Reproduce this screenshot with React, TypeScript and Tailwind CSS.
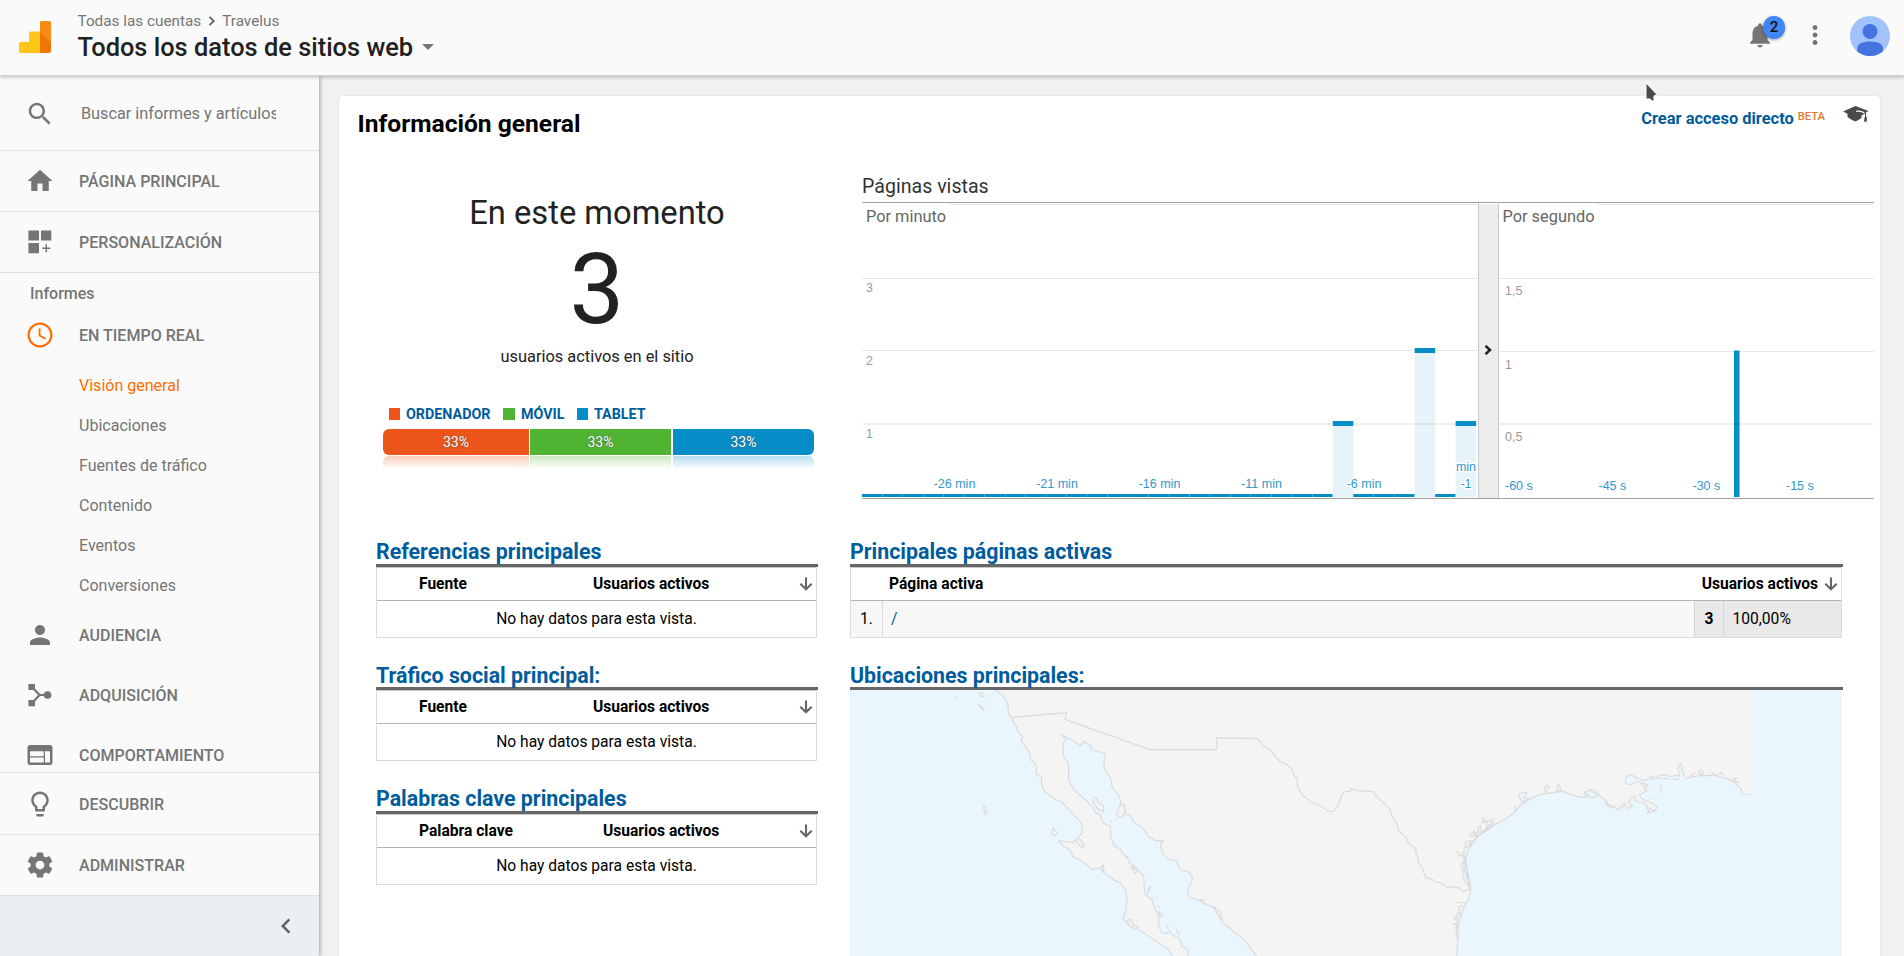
import React from "react";

type IconProps = { d: string; className?: string };

const Icon = ({ d, className = "h-[30px] w-[30px]" }: IconProps) => (
  <svg viewBox="0 0 24 24" className={`shrink-0 ${className}`} fill="currentColor">
    <path d={d} />
  </svg>
);

const PATHS = {
  search:
    "M15.5 14h-.79l-.28-.27C15.41 12.59 16 11.11 16 9.5 16 5.91 13.09 3 9.5 3S3 5.91 3 9.5 5.91 16 9.5 16c1.61 0 3.09-.59 4.23-1.57l.27.28v.79l5 4.99L20.49 19l-4.99-5zm-6 0C7.01 14 5 11.99 5 9.5S7.01 5 9.5 5 14 7.01 14 9.5 11.99 14 9.5 14z",
  home: "M10 20v-6h4v6h5v-8h3L12 3 2 12h3v8z",
  clock:
    "M11.99 2C6.47 2 2 6.48 2 12s4.47 10 9.99 10C17.52 22 22 17.52 22 12S17.52 2 11.99 2zM12 20.2c-4.53 0-8.2-3.67-8.2-8.2S7.470 3.800 12 3.800s8.200 3.670 8.200 8.200-3.670 8.200-8.200 8.200zM12.400 6.800h-1.500v6l5.200 3 .7-1.180-4.400-2.570z",
  person:
    "M12 12c2.21 0 4-1.79 4-4s-1.79-4-4-4-4 1.79-4 4 1.79 4 4 4zm0 2c-2.67 0-8 1.34-8 4v2h16v-2c0-2.66-5.33-4-8-4z",
  web: "M20 4H4c-1.1 0-1.99.9-1.99 2L2 18c0 1.1.9 2 2 2h16c1.1 0 2-.9 2-2V6c0-1.1-.9-2-2-2zm-5 14H4v-4h11v4zm0-5H4V9h11v4zm5 5h-4V9h4v9z",
  bulb: "M9 21c0 .55.45 1 1 1h4c.55 0 1-.45 1-1v-1H9v1zm3-19C8.14 2 5 5.14 5 9c0 2.38 1.19 4.47 3 5.74V17c0 .55.45 1 1 1h6c.55 0 1-.45 1-1v-2.26c1.81-1.27 3-3.36 3-5.74 0-3.86-3.14-7-7-7zm2.85 11.1l-.85.6V16h-4v-2.3l-.85-.6C7.8 12.16 7 10.63 7 9c0-2.76 2.24-5 5-5s5 2.24 5 5c0 1.63-.8 3.16-2.15 4.1z",
  gear: "M19.43 12.98c.04-.32.07-.64.07-.98s-.03-.66-.07-.98l2.11-1.65c.19-.15.24-.42.12-.64l-2-3.46c-.12-.22-.39-.3-.61-.22l-2.49 1c-.52-.4-1.08-.73-1.69-.98l-.38-2.65C14.46 2.18 14.25 2 14 2h-4c-.25 0-.46.18-.49.42l-.38 2.65c-.61.25-1.17.59-1.69.98l-2.49-1c-.23-.09-.49 0-.61.22l-2 3.46c-.13.22-.07.49.12.64l2.11 1.65c-.04.32-.07.65-.07.98s.03.66.07.98l-2.11 1.65c-.19.15-.24.42-.12.64l2 3.46c.12.22.39.3.61.22l2.49-1c.52.4 1.08.73 1.69.98l.38 2.65c.03.24.24.42.49.42h4c.25 0 .46-.18.49-.42l.38-2.65c.61-.25 1.17-.59 1.69-.98l2.49 1c.23.09.49 0 .61-.22l2-3.46c.12-.22.07-.49-.12-.64l-2.11-1.65zM12 15.5c-1.93 0-3.5-1.57-3.5-3.5s1.57-3.5 3.5-3.5 3.5 1.57 3.5 3.5-1.57 3.5-3.5 3.5z",
  left: "M15.41 7.41L14 6l-6 6 6 6 1.41-1.41L10.83 12z",
  bell: "M12 22c1.1 0 2-.9 2-2h-4c0 1.1.89 2 2 2zm6-6v-5c0-3.07-1.64-5.64-4.5-6.32V4c0-.83-.67-1.5-1.5-1.5s-1.5.67-1.5 1.5v.68C7.63 5.36 6 7.92 6 11v5l-2 2v1h16v-1l-2-2z",
  more: "M12 8c1.1 0 2-.9 2-2s-.9-2-2-2-2 .9-2 2 .9 2 2 2zm0 2c-1.1 0-2 .9-2 2s.9 2 2 2 2-.9 2-2-.9-2-2-2zm0 6c-1.1 0-2 .9-2 2s.9 2 2 2 2-.9 2-2-.9-2-2-2z",
};

const CustomizeIcon = () => (
  <svg viewBox="0 0 30 30" className="h-[30px] w-[30px] shrink-0" fill="currentColor">
    <path d="M3.4 3.4H14v10.2H3.4zM16 3.4h10.3v10.2H16zM3.4 16H14v10.3H3.4zM20.5 17.3h1.5v3.2h3.2V22H22v3.2h-1.5V22h-3.2v-1.5h3.2z" />
  </svg>
);

const AcquisitionIcon = () => (
  <svg viewBox="0 0 30 30" className="h-[30px] w-[30px] shrink-0" fill="currentColor">
    <path d="M3.4 4h6.6v6H3.4zM3.4 20h6.6v6.2H3.4z" />
    <path d="M8 8l6.6 7L8 22M14.6 15H22" fill="none" stroke="currentColor" strokeWidth="2.200" />
    <circle cx="22.6" cy="15" r="3.8" />
  </svg>
);

const Header = () => (
  <header className="relative z-20 flex h-[76px] shrink-0 items-start border-b border-[#cfcfcf] bg-[#fafafa] shadow-[0_1px_4px_rgba(0,0,0,0.25)]">
    <svg viewBox="0 0 32 32" className="mt-[21px] ml-[19px] h-8 w-8">
      <path d="M0 22.5q0-1.500 1.500-1.500H10V11.900q0-1.500 1.500-1.500H21V32H1.500Q0 32 0 30.500z" fill="#ffc517" />
      <path d="M21 2q0-1.700 1.700-1.700h7.600q1.700 0 1.700 1.700v28q0 2-2 2h-9z" fill="#ef7607" />
      <path d="M21 2q0-1.700 1.700-1.700h7.600q1.700 0 1.700 1.700v20L21 10.500z" fill="#f78a13" />
    </svg>
    <div className="ml-[26.500px] pt-[11px]">
      <div className="flex h-5 items-center text-[15.3px] leading-5 text-[#757575]">
        <span>Todas las cuentas</span>
        <svg viewBox="0 0 20 20" className="ml-px h-5 w-5" fill="none" stroke="#616161" strokeWidth="1.800">
          <path d="M7.500 5.800l4.300 4.200-4.300 4.200" />
        </svg>
        <span>Travelus</span>
      </div>
      <h1 className="flex h-8 items-center text-[25.4px] leading-8 font-medium text-[#212121]">
        Todos los datos de sitios web
        <svg viewBox="0 0 12 6" className="ml-[9px] h-[6px] w-[12px]" fill="#757575">
          <path d="M0 0h12L6 6z" />
        </svg>
      </h1>
    </div>
    <div className="mr-[14px] ml-auto flex items-start pt-4">
      <div className="relative mt-1 text-[#757575]">
        <Icon d={PATHS.bell} />
        <span className="absolute -top-1 left-[18px] flex h-[23px] w-[22px] items-center justify-center rounded-full bg-[#4285f4] text-[15px] font-medium text-[#111] shadow-[0_1px_3px_rgba(0,0,0,0.35)]">
          2
        </span>
      </div>
      <span className="mt-1 ml-[25px] text-[#757575]">
        <Icon d={PATHS.more} />
      </span>
      <svg viewBox="0 0 40 40" className="ml-[20px] h-10 w-10">
        <circle cx="20" cy="20" r="20" fill="#a1c2fa" />
        <circle cx="20" cy="15.500" r="7.500" fill="#4374e0" />
        <path d="M7.300 35.500V32c0-4.500 6-6.500 12.700-6.500s13 2 13 6.500v3.300A20 20 0 0 1 7.300 35.500z" fill="#4374e0" />
      </svg>
    </div>
  </header>
);

type NavProps = { icon: React.ReactNode; label: string; className: string };

const NavItem = ({ icon, label, className }: NavProps) => (
  <div className={`flex shrink-0 items-center pl-[25px] text-[#757575] ${className}`}>
    {icon}
    <span className="mt-px ml-6 pt-px text-[16.050px] leading-6 font-medium">{label}</span>
  </div>
);

const SUB_ITEMS = ["Visión general", "Ubicaciones", "Fuentes de tráfico", "Contenido", "Eventos", "Conversiones"];

const Sidebar = () => (
  <aside className="relative z-10 flex w-[319px] shrink-0 flex-col bg-[#fafafa] shadow-[1px_0_4px_rgba(0,0,0,0.35)]">
    <div className="flex h-[75px] shrink-0 items-center border-b border-[#e2e2e2] pl-[25px] text-[#757575]">
      <Icon d={PATHS.search} className="mt-px h-[30px] w-[30px]" />
      <span className="ml-[26px] w-[195px] overflow-hidden pt-px text-[16.25px] leading-6 whitespace-nowrap">
        Buscar informes y artículos
      </span>
    </div>
    <NavItem icon={<Icon d={PATHS.home} />} label="PÁGINA PRINCIPAL" className="h-[61px] border-b border-[#e2e2e2]" />
    <NavItem icon={<CustomizeIcon />} label="PERSONALIZACIÓN" className="h-[61px] border-b border-[#e2e2e2]" />
    <div className="flex min-h-0 flex-1 flex-col overflow-hidden">
      <div className="flex h-10 shrink-0 items-center pt-px pl-[30px] text-base font-medium text-[#757575]">
        Informes
      </div>
      <NavItem
        icon={
          <span className="text-[#ff6d00]">
            <Icon d={PATHS.clock} />
          </span>
        }
        label="EN TIEMPO REAL"
        className="h-[44px]"
      />
      <ul className="-mb-px shrink-0 pt-[9px] text-[16.050px] leading-10 text-[#757575]">
        {SUB_ITEMS.map((s, i) => (
          <li key={s} className={i === 0 ? "pl-[79px] text-[#ff6d00]" : "pl-[79px]"}>
            {s}
          </li>
        ))}
      </ul>
      <NavItem icon={<Icon d={PATHS.person} />} label="AUDIENCIA" className="h-[60px]" />
      <NavItem icon={<AcquisitionIcon />} label="ADQUISICIÓN" className="h-[60px]" />
      <NavItem icon={<Icon d={PATHS.web} />} label="COMPORTAMIENTO" className="h-[60px]" />
    </div>
    <NavItem icon={<Icon d={PATHS.bulb} />} label="DESCUBRIR" className="h-[62px] border-t border-[#e2e2e2]" />
    <NavItem icon={<Icon d={PATHS.gear} />} label="ADMINISTRAR" className="h-[61px] border-t border-[#e2e2e2]" />
    <div className="flex h-[61px] shrink-0 items-center justify-end border-t border-[#e2e2e2] bg-[#ebeff2] pr-[18px] text-[#616161]">
      <Icon d={PATHS.left} />
    </div>
  </aside>
);

const DEVICES = [
  { name: "ORDENADOR", box: "bg-[#ed561b] w-[11px]", bar: "bg-[#ed561b] w-[146px] rounded-l-md", fade: "from-[#ed561b] w-[146px] rounded-tl-md" },
  { name: "MÓVIL", box: "bg-[#50b432] w-[12px]", bar: "bg-[#50b432] w-[141px]", fade: "from-[#50b432] w-[141px]" },
  { name: "TABLET", box: "bg-[#058dc7] w-[11px]", bar: "bg-[#058dc7] w-[141px] rounded-r-md", fade: "from-[#058dc7] w-[141px] rounded-tr-md" },
];

const ActiveUsers = () => (
  <section className="ml-[37px] flex w-[442px] flex-col items-center pt-[41px] text-[#222]">
    <div className="text-[32.700px] leading-10">En este momento</div>
    <div className="mt-3 text-[97.500px] leading-[90px]">3</div>
    <div className="mt-3 text-[16.400px] leading-5">usuarios activos en el sitio</div>
    <div className="mt-[37px] flex h-5 items-center self-start pl-[13px] text-[14.300px] leading-5 font-bold text-[#005c9c]">
      {DEVICES.map((d) => (
        <span key={d.name} className="mr-[12.500px] flex items-center">
          <i className={`mr-[6px] -mt-px h-3 ${d.box}`} />
          {d.name}
        </span>
      ))}
    </div>
    <div className="mt-[5px] ml-[7px] flex h-[26px] self-start">
      {DEVICES.map((d, i) => (
        <div
          key={d.name}
          className={`flex items-center justify-center text-sm text-white [text-shadow:0_0_2px_#555] ${i === 2 ? "ml-[2px]" : i === 1 ? "ml-px" : ""} ${d.bar}`}
        >
          33%
        </div>
      ))}
    </div>
    <div className="mt-px ml-[7px] flex h-[13px] self-start opacity-30">
      {DEVICES.map((d, i) => (
        <div
          key={d.name}
          className={`bg-linear-to-b to-transparent ${i === 2 ? "ml-[2px]" : i === 1 ? "ml-px" : ""} ${d.fade}`}
        />
      ))}
    </div>
  </section>
);

const COLUMN = 20.47;
const MINUTES = Array.from({ length: 30 }, (_, i) => (i === 27 ? 2 : i === 23 || i === 29 ? 1 : 0));

const MinuteChart = () => (
  <svg
    viewBox="0 0 615 295"
    className="h-[295px] w-[615px] shrink-0 font-['Liberation_Sans',sans-serif] text-[12.500px]"
  >
    <rect x="88" y="1" width="527" height="1" fill="#e6e6e6" />
    <rect y="75" width="615" height="1" fill="#e6e6e6" />
    <rect y="147" width="615" height="1" fill="#e6e6e6" />
    <rect y="220" width="615" height="2" fill="#efefef" />
    {MINUTES.map((v, i) =>
      v === 0 ? (
        <rect key={i} x={i * COLUMN} y="291" width={COLUMN - 0.2} height="3" fill="#058dc7" />
      ) : (
        <g key={i} fill="#058dc7">
          <rect x={i * COLUMN} y={291 - v * 73} width={COLUMN} height={v * 73 + 3} fillOpacity="0.1" />
          <rect x={i * COLUMN} y={291 - v * 73} width={COLUMN} height="5" />
        </g>
      ),
    )}
    <g fill="#9a9a9a">
      <text x="4" y="89">3</text>
      <text x="4" y="162">2</text>
      <text x="4" y="235">1</text>
    </g>
    <g fill="#3399cc" textAnchor="middle" stroke="#fff" strokeWidth="3" strokeLinejoin="round" paintOrder="stroke">
      <text x="92.500" y="285">-26 min</text>
      <text x="195" y="285">-21 min</text>
      <text x="297.500" y="285">-16 min</text>
      <text x="399.500" y="285">-11 min</text>
      <text x="502" y="285">-6 min</text>
      <text x="604" y="267.500">min</text>
      <text x="604" y="285">-1</text>
    </g>
  </svg>
);

const SecondChart = () => (
  <svg viewBox="0 0 375 295" className="h-[295px] w-[375px] font-['Liberation_Sans',sans-serif] text-[12.500px]">
    <rect x="99" y="1" width="276" height="1" fill="#e6e6e6" />
    <rect y="75" width="375" height="1" fill="#e6e6e6" />
    <rect y="148" width="375" height="1" fill="#e6e6e6" />
    <rect x="235" y="147.500" width="5.500" height="146.500" fill="#058dc7" />
    <rect y="220" width="375" height="2" fill="#000" fillOpacity="0.06" />
    <g fill="#9a9a9a">
      <text x="6" y="92">1,5</text>
      <text x="6" y="166">1</text>
      <text x="6" y="238">0,5</text>
    </g>
    <g fill="#3399cc">
      <text x="6" y="287">-60 s</text>
      <text x="99.500" y="287">-45 s</text>
      <text x="193.500" y="287">-30 s</text>
      <text x="287" y="287">-15 s</text>
    </g>
  </svg>
);

const PageViews = () => (
  <section className="ml-[44px] w-[1012px] pt-[21px]">
    <h3 className="h-[30px] border-b border-[#a0a0a0] pt-px text-[19.600px] leading-[26px] text-[#333]">
      Páginas vistas
    </h3>
    <div className="flex h-[296px] border-b border-[#a0a0a0]">
      <div className="relative">
        <MinuteChart />
        <span className="absolute top-1 left-1 text-[16.350px] leading-5 text-[#666]">Por minuto</span>
      </div>
      <div className="mt-px ml-px flex w-[21px] items-center justify-center border-x border-[#c8c8c8] bg-[#ededed] pr-[2px] pb-[3px]">
        <svg viewBox="0 0 8 10" className="h-[10px] w-2" fill="none" stroke="#222" strokeWidth="2.500">
          <path d="M1.500 .8L6 5 1.500 9.200" />
        </svg>
      </div>
      <div className="relative">
        <SecondChart />
        <span className="absolute top-1 left-[3.500px] text-[16.350px] leading-5 text-[#666]">Por segundo</span>
      </div>
    </div>
  </section>
);

const SortArrow = () => (
  <svg viewBox="0 0 14 14" className="h-[14px] w-[14px] shrink-0" fill="none" stroke="#666" strokeWidth="2.100">
    <path d="M7 .5v11.500M1.300 6.800L7 12.300l5.700-5.500" />
  </svg>
);

const BlockTitle = ({ children, className = "" }: { children: React.ReactNode; className?: string }) => (
  <h2
    className={`h-[27px] border-b-[3px] border-[#666] text-[21.350px] leading-6 font-bold whitespace-nowrap text-[#005c9c] ${className}`}
  >
    {children}
  </h2>
);

type EmptyTableProps = { title: string; column: string; metricClass: string; titleClass?: string };

const EmptyTable = ({ title, column, metricClass, titleClass }: EmptyTableProps) => (
  <section className="w-[442px]">
    <BlockTitle className={titleClass}>{title}</BlockTitle>
    <div className="mr-px border border-t-0 border-[#dcdcdc] text-[15.600px] text-black">
      <div className="flex h-[34px] items-center border-y border-t-[#c8c8c8] border-b-[#b4b4b4] pr-[3px] pl-[42px] font-bold">
        <span className={`pt-[2px] ${metricClass}`}>{column}</span>
        <span className="flex-1 pt-[2px]">Usuarios activos</span>
        <SortArrow />
      </div>
      <div className="flex h-9 items-center justify-center pt-[2px]">No hay datos para esta vista.</div>
    </div>
  </section>
);

const ActivePages = () => (
  <section className="w-[993px]">
    <BlockTitle>Principales páginas activas</BlockTitle>
    <div className="mr-px border border-t-0 border-[#dcdcdc] text-[15.600px] text-black">
      <div className="flex h-[34px] items-center border-y border-t-[#c8c8c8] border-b-[#b4b4b4] pr-[3px] pl-[38px] font-bold">
        <span className="flex-1 pt-[2px]">Página activa</span>
        <span className="mr-[6px] pt-[2px]">Usuarios activos</span>
        <SortArrow />
      </div>
      <div className="flex h-9 items-stretch bg-[#f7f7f7] leading-9">
        <span className="w-[32px] border-r border-[#dcdcdc] pl-[9px]">1.</span>
        <span className="flex-1 pl-[8px] text-[#005c9c]">/</span>
        <span className="w-[30px] border-x border-[#d6d6d6] bg-[#e9e9e9] text-center font-bold">3</span>
        <span className="w-[117px] bg-[#e9e9e9] pl-[8.500px]">100,00%</span>
      </div>
    </div>
  </section>
);

const WEST =
  "M462 510L483 526 494 542 498 556 500 582 510 592 516 612 522 618 526 634 540 650 536 662 544 676 558 696 561 718 577 734 578 764 592 770 593 798 602 815 630 838 649 846 678 880 705 911 706 938 692 957 680 967 641 963 654 979 672 990 682 1013 700 1019 718 1035 734 1049 758 1044 764 1056 796 1081 812 1087 828 1110 832 1140 828 1175 820 1196 832 1212 866 1230 905 1258 945 1286 960 1308";
const BAJA_EAST =
  "M1003 1308L1003 1290 985 1278 978 1254 960 1246 950 1232 944 1240 930 1240 920 1218 920 1186 908 1164 902 1140 882 1122 878 1068 866 1056 860 1046 838 1028 832 1012 820 1002 812 986 796 978 786 952 785 918 766 910 756 884 742 878 736 862 720 844 690 816 668 783 668 730 654 710 652 674 660 658 648 644";
const SONORA =
  "M648 644L674 658 702 677 710 664 730 676 734 690 771 702 766 738 788 780 790 802 810 830 816 854 824 854 826 880 844 890 852 908 876 924 894 952 904 956 910 962 934 962 926 970 930 1000 948 1018 970 1022 980 1050 1002 1054 1014 1068 1014 1082 1002 1106 1004 1132 1030 1140 1060 1156 1078 1162 1098 1206 1162 1262 1195 1308";
const GULF =
  "M1109 825L1084 822 1080 806 1062 790 1040 776 1000 766 950 768 914 775 906 758 904 740 896 734 892 744 896 768 882 766 872 770 854 764 836 766 828 774 810 770 800 780 784 780 766 772 750 764 736 772 734 790 748 794 770 786 790 790 802 796 790 806 800 812 784 820 776 826 786 838 806 846 822 854 828 862 820 876 808 864 800 868 796 852 776 846 762 840 764 828 750 834 744 848 756 858 744 866 730 850 718 862 712 870 700 858 682 856 676 842 660 830 650 818 636 808 618 814 612 820 620 830 602 832 580 826 546 814 500 820 478 824 440 842 420 856 392 886 348 912 316 926 290 950 270 978 260 1000 254 1024 258 1050 268 1094 271 1110 266 1134 246 1174 236 1206 230 1308";

const LocationMap = () => (
  <svg
    viewBox="850 690 992 266"
    className="h-[266px] w-[992px] bg-[#e9f6fe]"
    fill="none"
    stroke="#dcdcdc"
    strokeWidth="1.250"
    strokeLinejoin="round"
  >
    <g transform="translate(830 520) scale(0.35714 0.33333)">
      <path
        d={`${WEST}L1003 1308${BAJA_EAST.replace("M1003 1308", "")}${SONORA.replace("M648 644", "")}L1590 1308V510z`}
        fill="#f4f4f4"
        stroke="none"
      />
      <g className="[&_path]:[vector-effect:non-scaling-stroke]">
        <path d={WEST} />
        <path d={BAJA_EAST} />
        <path d={SONORA} />
        <path d="M510 592L663 578 657 598 896 689H1083V654L1198 656 1212 678 1228 686 1262 726 1276 732 1294 747 1298 764 1308 776 1310 802 1322 824 1346 846 1368 854 1396 874 1410 874 1424 856 1424 848 1438 816 1456 814 1460 806 1474 811 1520 815 1530 828 1554 852 1570 873" />
        <path
          d="M736 836L744 832 752 848 766 858 766 876 752 868 740 854zM812 854L824 856 826 876 818 892 802 886zM624 922L636 938 630 948 622 944zM430 860L436 858 439 876 434 884zM416 518L430 520 432 530 422 528zM414 554L430 564 430 572zM348 530L360 536M782 900L790 906M798 896L804 900M690 956L704 960 708 974 714 978 704 982 692 970zM844 1040L862 1050 854 1062zM892 1106L898 1098 890 1118zM902 1128V1132M916 1130V1136M918 1158L922 1164M920 1176L932 1188 924 1190zM940 1214L948 1226M970 1228L978 1244M832 1200L844 1200 850 1216 864 1220 854 1230 836 1214zM1036 1138L1048 1140 1046 1152zM1072 1160L1092 1176 1098 1200 1086 1184zM758 1044L764 1034 768 1056zM824 1190L828 1174M532 654L540 660M826 1012L836 1010"
          fill="#f4f4f4"
        />
      </g>
    </g>
    <g transform="translate(1380 520) scale(0.33423 0.33333)">
      <path d={`M0 510H1109V825${GULF.replace("M1109 825", "")}L0 1308z`} fill="#f4f4f4" stroke="none" />
      <g className="[&_path]:[vector-effect:non-scaling-stroke]">
        <path d={GULF} />
        <path d="M0 838L28 866 38 892 52 912 54 930 78 952 84 968 107 986 108 1004 113 1010 114 1028 126 1042 136 1072 156 1078 168 1086 182 1088 198 1101 236 1103 250 1115 262 1108 271 1108" />
        <path
          d="M414 822L432 816 440 818 430 834 446 836 424 846zM322 906L336 898 334 912 318 922zM294 926L300 916 304 930 290 940zM254 966L272 962 266 978 258 984zM242 1030L250 1028 252 1050 262 1076 266 1100 258 1090 248 1070 248 1046 242 1044zM236 1160L252 1158 246 1176 238 1186zM612 820L626 810 644 820 652 828 634 834zM490 806L500 796 506 800 496 816z"
          fill="#e9f6fe"
        />
        <path d="M534 790L528 812 542 812 534 790M404 858V876L412 866M304 894L320 904 304 908 312 896M266 944L282 938 286 946 270 950M226 994L250 1008 230 1008M252 980L250 1030 256 1006M230 1150L244 1146 256 1152M234 1176L222 1198 232 1200M220 1214L226 1210 230 1222 222 1224M228 1230V1256M232 1190L230 1240M840 796V814M826 832V838M814 838H818M808 780L822 776M830 774H840M848 776H866M876 777L896 778M782 794L796 800M800 862L806 880 816 872 828 868M804 872L800 882M672 848L690 862 704 864M688 852L676 856M732 858L724 866M960 746L954 760 966 764 966 750M926 770L944 758M990 756L1006 766 1022 758 1030 770M1048 780L1066 774 1060 784 1076 788M896 730L904 734M280 930L290 946M346 906L324 918" />
        <path d="M256 1020L262 1060 270 1100M268 980L290 950 340 916" strokeWidth="2" />
      </g>
    </g>
  </svg>
);

const GradCap = () => (
  <svg viewBox="0 0 26 17" className="h-[17px] w-[26px]" fill="#4a4a4a">
    <path d="M0 5.500L12.500 0l13 5-2.500 1.200v4.300l1 1.300-.5 4.200-2.500-.6.500-3.700.5-1V7.400l-3.500 2v2.400Q16 14 12.500 15.500 8 13.800 4.500 11V7.800z" />
    <path d="M21.500 7Q18 4.600 13 5.300" stroke="#fff" strokeWidth="1.100" fill="none" />
  </svg>
);

export default function App() {
  return (
    <div className="relative flex h-[956px] w-[1904px] flex-col overflow-hidden bg-[#f1f1f1] font-['Roboto',sans-serif]">
      <Header />
      <div className="flex min-h-0 flex-1">
        <Sidebar />
        <main className="flex-1 overflow-hidden pt-5 pr-6 pl-5">
          <div className="h-[900px] rounded bg-white shadow-[0_0_1px_1px_rgba(0,0,0,0.04)]">
            <div className="flex h-14 items-start justify-between pt-3 pr-[11px] pl-[18.500px]">
              <h2 className="text-[24.600px] leading-[31px] font-bold text-black">Información general</h2>
              <div className="flex items-start">
                <span className="text-[16.450px] leading-[21px] font-bold text-[#005c9c]">Crear acceso directo</span>
                <span className="ml-1 pt-px text-[11.200px] leading-4 font-medium text-[#e07830]">BETA</span>
                <div className="-mt-[2px] ml-[18px]">
                  <GradCap />
                </div>
              </div>
            </div>
            <div className="flex h-[388px]">
              <ActiveUsers />
              <PageViews />
            </div>
            <div className="flex gap-8 pl-[37px]">
              <div>
                <EmptyTable title="Referencias principales" column="Fuente" metricClass="w-[174px]" />
                <div className="h-[25px]" />
                <EmptyTable
                  title="Tráfico social principal:"
                  titleClass="pt-px"
                  column="Fuente"
                  metricClass="w-[174px]"
                />
                <div className="h-[26px]" />
                <EmptyTable title="Palabras clave principales" column="Palabra clave" metricClass="w-[184px]" />
              </div>
              <div>
                <ActivePages />
                <div className="h-[25px]" />
                <section className="w-[993px]">
                  <BlockTitle className="pt-px">Ubicaciones principales:</BlockTitle>
                  <LocationMap />
                </section>
              </div>
            </div>
          </div>
        </main>
      </div>
      <svg viewBox="0 0 13 21" className="absolute top-[82px] left-[1645px] z-30 h-[21px] w-[13px]">
        <path d="M1 1l11 11.500-3 1.500v5H7.300l-2.300-2H1z" fill="#4a4a4a" stroke="#fff" strokeWidth="1" />
      </svg>
    </div>
  );
}
